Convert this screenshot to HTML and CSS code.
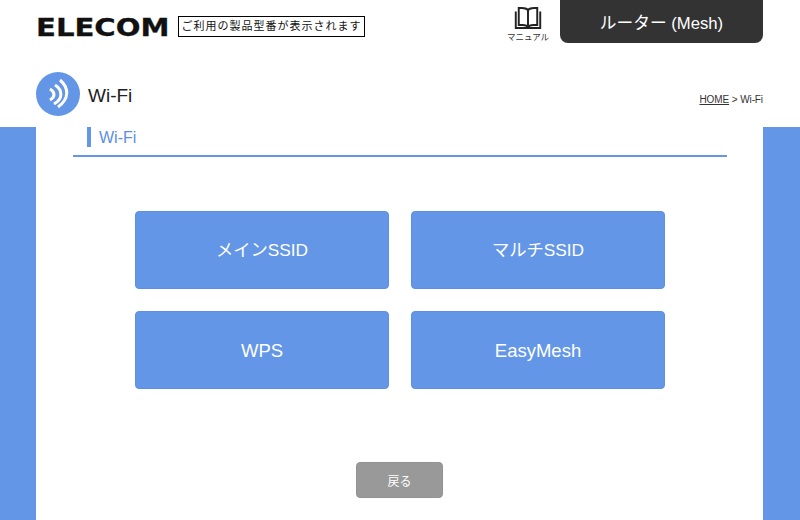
FILE: index.html
```html
<!DOCTYPE html>
<html lang="ja">
<head>
    <meta charset="UTF-8">
    <title>Wi-Fi</title>
    <link rel="stylesheet" href="styles.css">
</head>
<body>
    <header class="header">
        <div class="top-bar">
            <div class="logo"><span class="logo-text">ELECOM</span></div>
            <div class="model-box">ご利用の製品型番が表示されます</div>
            <a class="manual">
                <svg class="manual-icon" width="30" height="25" viewBox="0 0 30 25" fill="none" stroke="#222" stroke-width="2.2">
                    <path d="M1.1 5 V23.9 H28.9 V5"/>
                    <path d="M15 3.5 C13.5 1.8 11 1.1 8 1.1 H4.5 V20.5 H9 C12 20.5 14 21 15 22.8 C16 21 18 20.5 21 20.5 H25.5 V1.1 H22 C19 1.1 16.5 1.8 15 3.5 Z"/>
                    <path d="M15 3.5 V22"/>
                </svg>
                <span class="manual-label">マニュアル</span>
            </a>
            <div class="mode-tab">ルーター (Mesh)</div>
        </div>
        <div class="title-bar">
            <div class="page-title">
                <svg class="title-icon" width="44" height="44" viewBox="0 0 44 44" fill="none" stroke="#fff" stroke-width="3">
                    <circle cx="22" cy="22" r="22" fill="#6396e6" stroke="none"/>
                    <path d="M14 17 C19.3 20 19.3 25 14 28"/>
                    <path d="M19 13 C27 18 27 27 18 32"/>
                    <path d="M24 8 C33.3 16 33.3 27 22 35"/>
                </svg>
                <span class="title-text">Wi-Fi</span>
            </div>
            <div class="breadcrumb"><a class="crumb-link">HOME</a> &gt; Wi-Fi</div>
        </div>
    </header>

    <main class="main">
        <div class="content">
            <h2 class="section-title"><span class="section-label">Wi-Fi</span></h2>
            <div class="menu-grid">
                <button class="menu-button">メインSSID</button>
                <button class="menu-button">マルチSSID</button>
                <button class="menu-button menu-button-latin">WPS</button>
                <button class="menu-button menu-button-latin">EasyMesh</button>
            </div>
            <div class="actions">
                <button class="back-button">戻る</button>
            </div>
        </div>
    </main>
</body>
</html>
```
FILE: styles.css
```css
* {
    margin: 0;
    padding: 0;
    box-sizing: border-box;
}
html, body {
    height: 100%;
}
body {
    font-family: "Liberation Sans", "Noto Sans CJK JP", sans-serif;
    display: flex;
    flex-direction: column;
    height: 520px;
    overflow: hidden;
    background-color: #fff;
    color: #222;
}
.header {
    height: 127px;
    padding: 0 37px 0 36px;
    flex-shrink: 0;
}
.top-bar {
    display: flex;
    height: 43px;
}
.logo {
    flex: none;
    width: 132px;
    height: 20px;
    margin-top: 17.5px;
}
.logo-text {
    display: block;
    font-family: "DejaVu Sans", sans-serif;
    font-weight: 700;
    font-size: 25px;
    line-height: 20px;
    color: #111;
    white-space: nowrap;
    -webkit-text-stroke: 0.3px #111;
    transform: scale(1.165, 1);
    transform-origin: left center;
}
.model-box {
    flex: none;
    width: 187px;
    height: 21px;
    margin: 16px 0 0 10px;
    border: 1px solid #000;
    font-size: 11px;
    line-height: 19px;
    letter-spacing: 1px;
    text-align: center;
    white-space: nowrap;
    color: #111;
}
.manual {
    flex: none;
    display: flex;
    flex-direction: column;
    align-items: center;
    width: 60px;
    margin-left: 133px;
    padding-top: 7px;
}
.manual-icon {
    display: block;
}
.manual-label {
    font-size: 8.5px;
    line-height: 12px;
    margin-top: 2px;
    white-space: nowrap;
    color: #333;
}
.mode-tab {
    flex: none;
    width: 203px;
    margin-left: 2px;
    background-color: #333;
    border-radius: 0 0 8px 8px;
    color: #fff;
    font-size: 16.7px;
    line-height: 48px;
    text-align: center;
}
.title-bar {
    display: flex;
    justify-content: space-between;
    margin-top: 29px;
}
.page-title {
    display: flex;
    align-items: center;
    gap: 8px;
}
.title-icon {
    display: block;
}
.title-text {
    font-size: 19px;
    padding-top: 4px;
    color: #222;
}
.breadcrumb {
    font-size: 10px;
    letter-spacing: -0.1px;
    line-height: 13px;
    margin-top: 21px;
    color: #333;
}
.crumb-link {
    text-decoration: underline;
}
.main {
    flex: 1;
    padding: 0 37px 0 36px;
    background-color: #6396e6;
}
.content {
    height: 100%;
    background-color: #fff;
    padding: 0 36px 0 37px;
}
.section-title {
    height: 30px;
    padding-left: 14px;
    border-bottom: 2px solid #6396e6;
    font-size: 16px;
    font-weight: 400;
    color: #5a8fe6;
}
.section-label {
    display: block;
    height: 20px;
    padding-left: 8px;
    border-left: 4px solid #6396e6;
    line-height: 22px;
}
.menu-grid {
    display: grid;
    grid-template-columns: repeat(2, 254px);
    grid-auto-rows: 78px;
    gap: 22px;
    justify-content: center;
    margin-top: 54px;
}
.menu-button {
    background-color: #6396e6;
    border: 1px solid #5b90e4;
    border-radius: 4px;
    color: #fff;
    font-family: inherit;
    font-size: 17.3px;
    line-height: 20px;
}
.menu-button-latin {
    font-size: 18.5px;
    padding-top: 2px;
}
.actions {
    display: flex;
    justify-content: center;
    margin-top: 73px;
    padding-right: 1px;
}
.back-button {
    width: 87px;
    height: 36px;
    background-color: #999;
    border: 1px solid #939393;
    border-radius: 4px;
    color: #fff;
    font-family: inherit;
    font-size: 12px;
}
```
